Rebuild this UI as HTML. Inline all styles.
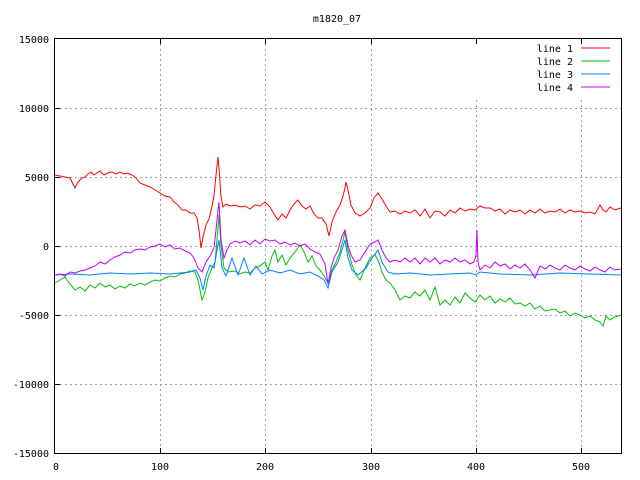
<!DOCTYPE html>
<html><head><meta charset="utf-8"><style>
html,body{margin:0;padding:0;background:#fff;}
svg{display:block;}
text{font-family:"DejaVu Sans Mono","Liberation Mono",monospace;font-size:10px;fill:#000;}
</style></head><body>
<svg width="640" height="480" viewBox="0 0 640 480" xmlns="http://www.w3.org/2000/svg">
<rect width="640" height="480" fill="#fff"/>
<g stroke="#a0a0a0" stroke-width="1" stroke-dasharray="2,3" shape-rendering="crispEdges">
<line x1="160.5" y1="39" x2="160.5" y2="453"/>
<line x1="265.5" y1="39" x2="265.5" y2="453"/>
<line x1="371.5" y1="39" x2="371.5" y2="453"/>
<line x1="476.5" y1="100" x2="476.5" y2="453"/>
<line x1="581.5" y1="100" x2="581.5" y2="453"/>
<line x1="55" y1="108.5" x2="621" y2="108.5"/>
<line x1="55" y1="177.5" x2="621" y2="177.5"/>
<line x1="55" y1="246.5" x2="621" y2="246.5"/>
<line x1="55" y1="315.5" x2="621" y2="315.5"/>
<line x1="55" y1="384.5" x2="621" y2="384.5"/>
<line x1="476.5" y1="39" x2="476.5" y2="100" stroke-dasharray="none" opacity="0"/>
</g>
<g stroke="#000" stroke-width="1" shape-rendering="crispEdges" fill="none">
<rect x="54.5" y="38.5" width="567" height="415"/>
<line x1="160.5" y1="453" x2="160.5" y2="448"/><line x1="160.5" y1="39" x2="160.5" y2="44"/>
<line x1="265.5" y1="453" x2="265.5" y2="448"/><line x1="265.5" y1="39" x2="265.5" y2="44"/>
<line x1="371.5" y1="453" x2="371.5" y2="448"/><line x1="371.5" y1="39" x2="371.5" y2="44"/>
<line x1="476.5" y1="453" x2="476.5" y2="448"/><line x1="476.5" y1="39" x2="476.5" y2="44"/>
<line x1="581.5" y1="453" x2="581.5" y2="448"/><line x1="581.5" y1="39" x2="581.5" y2="44"/>
<line x1="55" y1="108.5" x2="60" y2="108.5"/><line x1="55" y1="177.5" x2="60" y2="177.5"/>
<line x1="55" y1="246.5" x2="60" y2="246.5"/><line x1="55" y1="315.5" x2="60" y2="315.5"/>
<line x1="55" y1="384.5" x2="60" y2="384.5"/>
</g>
<text x="337" y="22" text-anchor="middle">m1820_07</text>
<g text-anchor="end">
<text x="49" y="43">15000</text><text x="49" y="112">10000</text><text x="49" y="181">5000</text>
<text x="49" y="250">0</text><text x="49" y="319">-5000</text><text x="49" y="388">-10000</text>
<text x="49" y="457">-15000</text>
</g>
<g text-anchor="middle">
<text x="56" y="470">0</text><text x="160" y="470">100</text><text x="265" y="470">200</text>
<text x="371" y="470">300</text><text x="476" y="470">400</text><text x="581" y="470">500</text>
</g>
<g text-anchor="end">
<text x="573" y="52">line 1</text><text x="573" y="65">line 2</text>
<text x="573" y="78">line 3</text><text x="573" y="91">line 4</text>
</g>
<line x1="581" y1="48" x2="610" y2="48" stroke="#ff0000"/>
<line x1="581" y1="61" x2="610" y2="61" stroke="#00c000"/>
<line x1="581" y1="74" x2="610" y2="74" stroke="#0080ff"/>
<line x1="581" y1="87" x2="610" y2="87" stroke="#c000ff"/>
<g fill="none" stroke-width="1">
<polyline stroke="#00c000" points="55,283 60,280 65,277 70,284 75,290 80,287 85,291 90,285 95,288 100,283 105,287 110,285 115,289 120,286 125,288 130,284 135,286 140,283 145,285 150,282 155,280 160,281 165,278 170,276 175,277 180,274 185,273 190,271 195,272 198,280 202,300 205,292 208,278 212,268 215,262 217,240 219,215 221,245 224,268 228,272 235,271 240,274 245,272 250,273 255,268 260,266 265,262 268,270 272,256 275,250 278,262 282,255 286,265 290,258 295,252 300,245 304,252 308,262 312,256 316,266 320,270 324,276 328,283 332,270 336,262 340,252 343,240 345,232 348,250 352,265 356,275 360,280 365,268 370,258 375,255 378,260 382,272 386,280 390,283 395,290 400,300 405,296 410,298 415,292 420,296 425,290 430,300 435,287 440,305 445,300 450,305 455,297 460,303 465,293 470,298 475,302 480,295 485,300 490,296 495,303 500,299 505,302 510,298 515,304 520,303 525,306 530,303 535,309 540,306 545,311 550,310 555,309 560,313 565,311 570,316 575,313 580,315 585,318 590,316 595,320 600,322 603,326 606,316 610,320 615,317 621,315"/>
<polyline stroke="#0080ff" points="55,275 70,274 90,275 110,273 130,274 150,273 170,274 190,272 196,270 200,278 203,290 206,276 210,265 214,268 217,250 219,240 222,268 226,276 232,258 238,275 244,258 250,275 256,266 262,274 270,270 280,273 290,270 300,274 310,272 318,276 324,280 328,288 332,272 338,262 342,250 345,240 348,258 352,270 358,275 366,268 372,258 378,250 382,262 388,272 395,274 410,273 430,275 450,274 470,273 476,275 480,272 500,274 530,275 560,273 590,274 621,275"/>
<polyline stroke="#c000ff" points="55,275 60,274 65,276 70,272 75,273 80,271 85,270 90,268 95,266 100,262 105,264 110,260 115,257 120,255 125,252 130,253 135,250 140,249 145,250 150,247 155,246 160,244 165,247 170,245 175,249 180,248 185,251 190,253 194,258 198,268 202,272 206,262 210,256 214,248 216,230 218,210 219,202 221,240 224,258 227,250 230,244 235,241 240,243 245,241 250,245 255,240 260,244 265,239 270,241 275,240 280,244 285,242 290,245 295,243 300,246 305,244 310,249 315,252 320,254 325,264 328,284 331,268 334,258 338,250 342,236 345,230 348,245 351,255 355,262 360,260 365,252 370,244 375,242 378,240 382,250 386,258 390,262 395,260 400,262 405,258 410,262 415,258 420,264 425,258 430,262 435,258 440,264 445,260 450,262 455,258 460,262 465,260 470,264 474,262 476,255 477,230 478,262 480,270 485,265 490,268 495,262 500,266 505,264 510,269 515,265 520,268 525,264 530,270 535,278 540,266 545,269 550,265 555,268 560,270 565,265 570,268 575,270 580,266 585,269 590,271 595,267 600,270 605,272 610,267 615,270 621,269"/>
<polyline stroke="#ff0000" points="55,175 60,176 65,177 70,178 73,184 75,188 78,182 82,178 85,177 88,174 91,172 94,175 97,173 100,171 104,175 108,173 112,172 116,174 120,172 124,174 128,173 132,175 136,178 140,183 145,185 150,187 155,190 160,193 165,196 170,197 174,202 178,205 182,210 186,210 190,213 194,213 197,218 199,230 201,248 203,237 206,225 209,219 212,206 214,196 216,175 218,157 219,168 221,196 223,207 226,204 230,206 235,205 240,207 245,206 250,209 255,205 260,206 265,202 270,207 274,214 278,220 282,214 286,218 290,210 294,204 298,200 302,206 306,209 310,206 314,214 318,218 322,218 326,224 329,236 332,222 336,212 340,205 343,196 345,188 346,182 348,190 351,205 355,213 360,216 365,213 370,208 374,198 378,193 382,199 386,206 390,212 395,211 400,214 405,211 410,213 415,210 420,216 425,209 430,218 435,211 440,212 445,216 450,210 455,213 460,208 465,211 470,209 475,210 480,206 485,208 490,208 495,211 500,209 505,214 510,210 515,212 520,210 525,214 530,210 535,213 540,209 545,213 550,211 555,212 560,209 565,213 570,210 575,212 580,211 585,213 590,212 595,214 600,205 603,210 606,212 610,207 615,210 621,208"/>
</g>
</svg>
</body></html>
